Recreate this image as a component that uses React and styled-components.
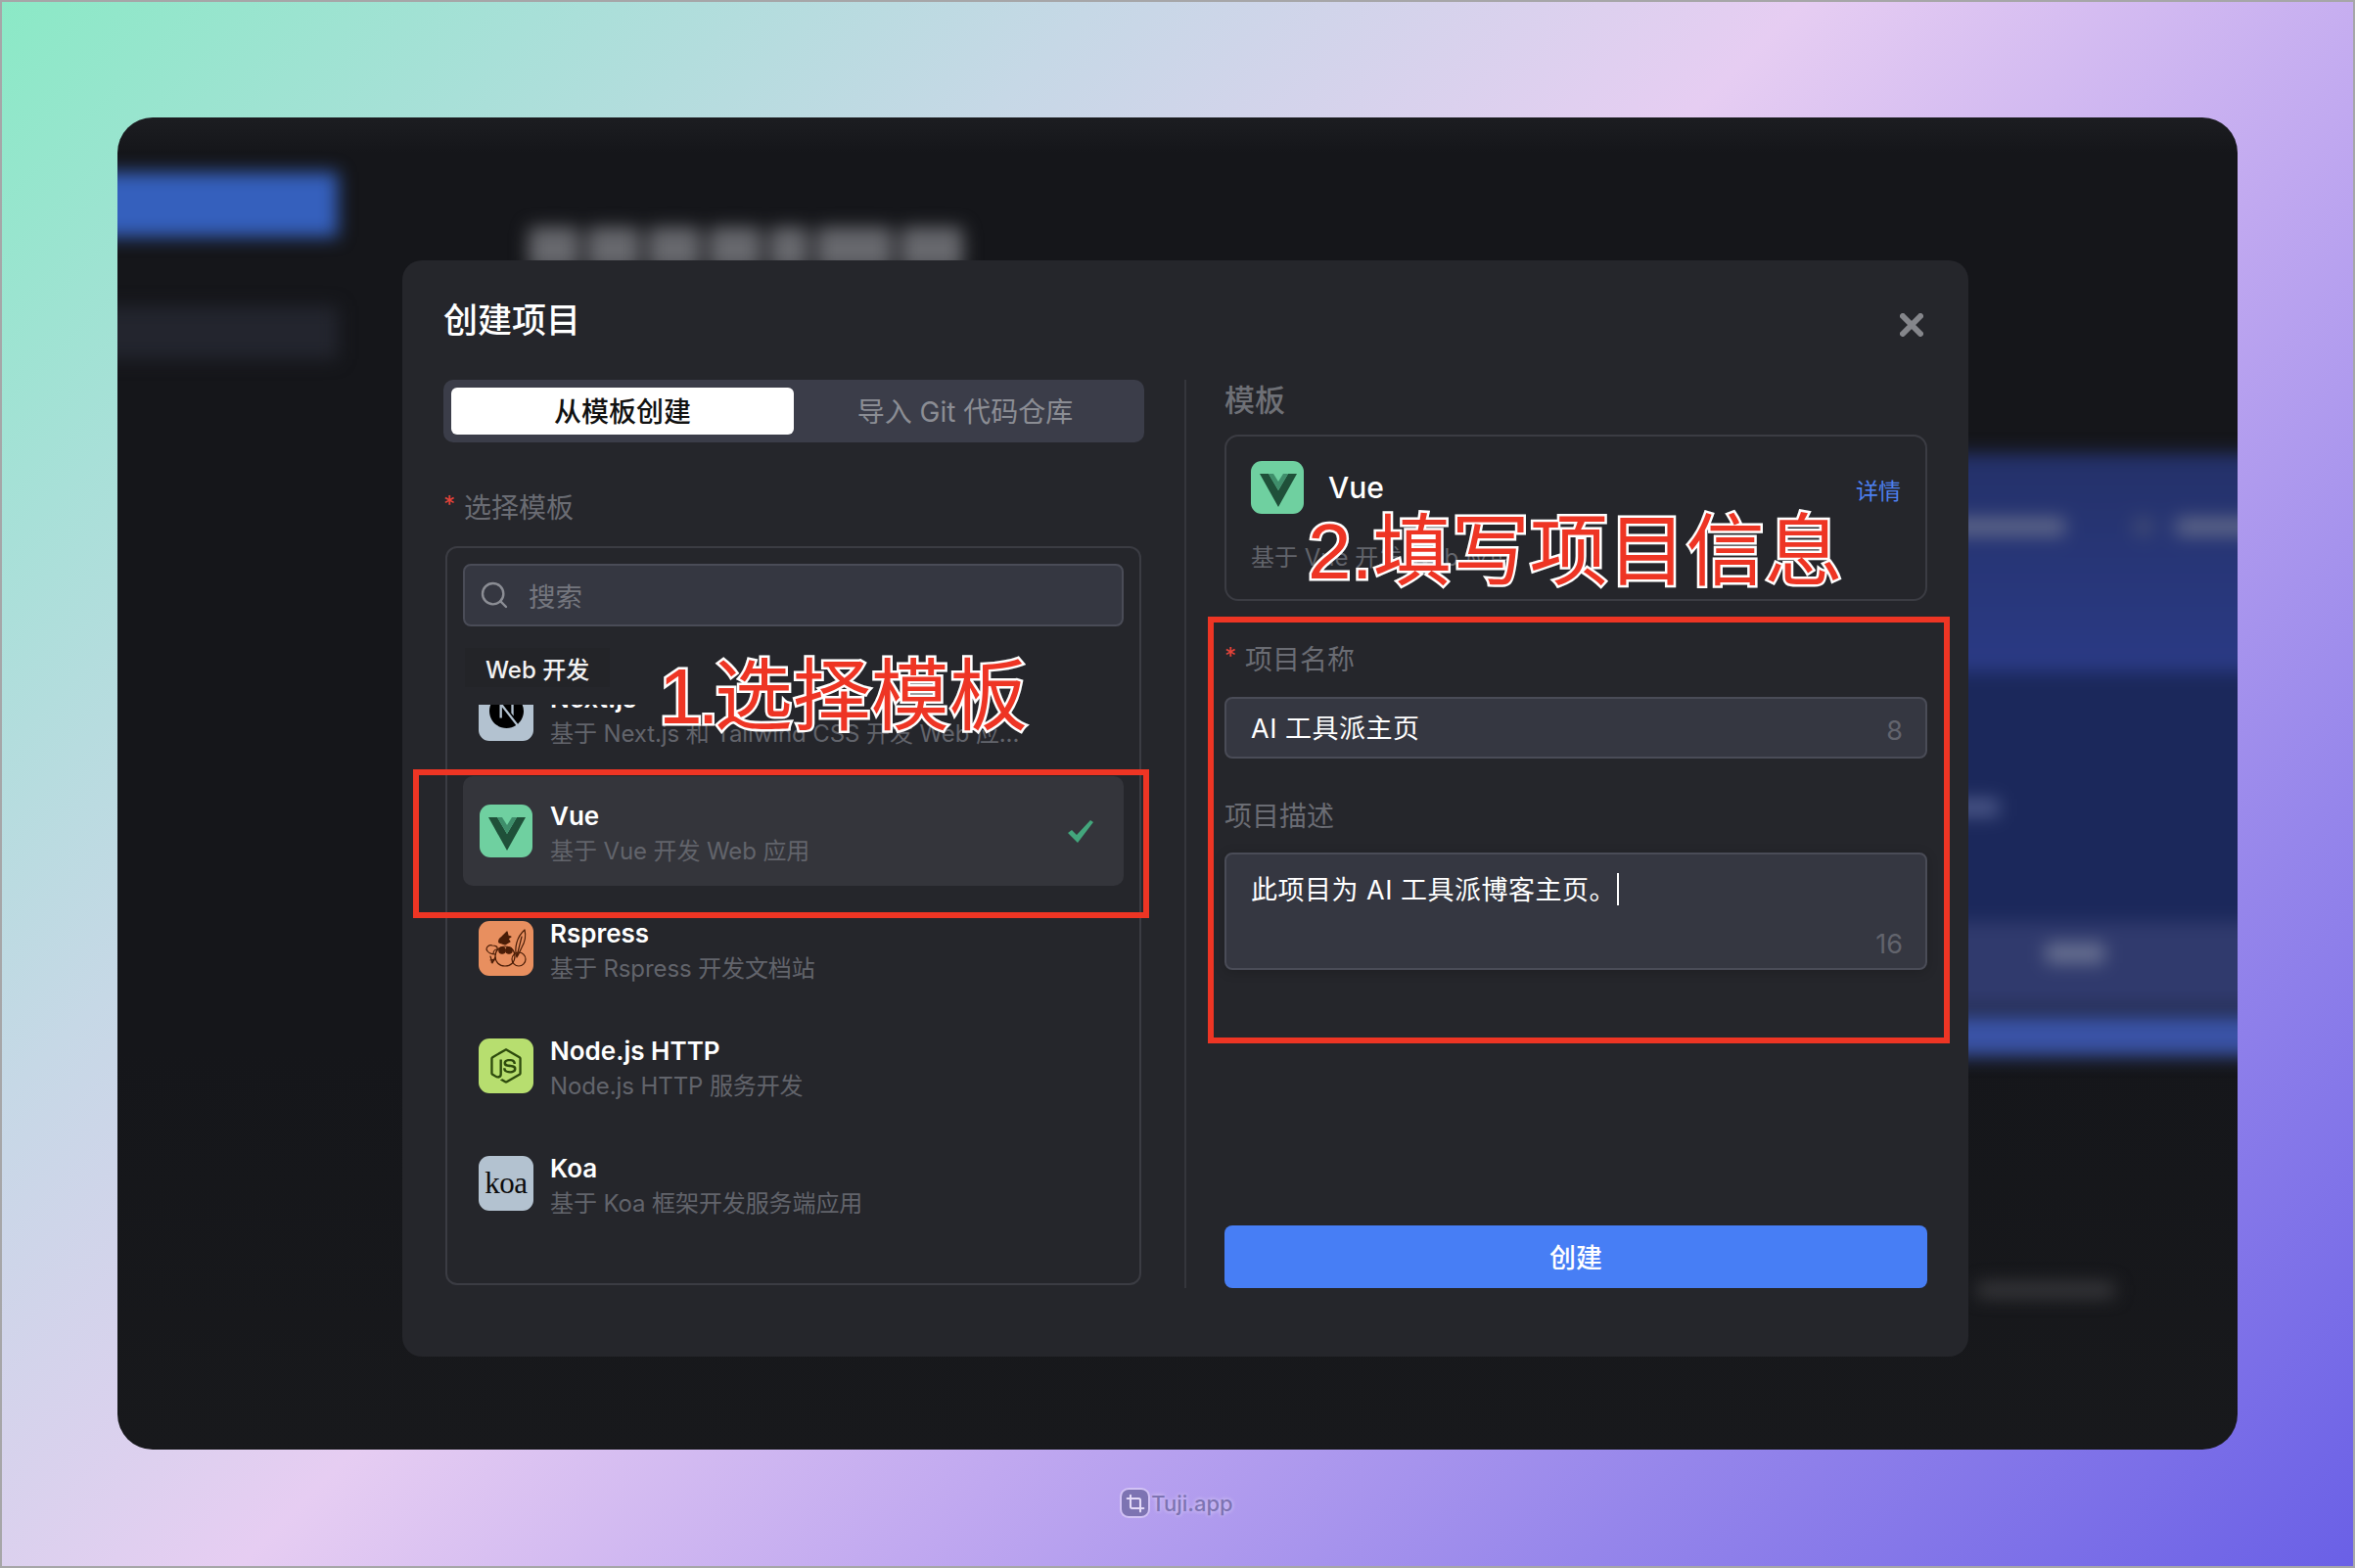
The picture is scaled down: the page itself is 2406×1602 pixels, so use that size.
import React from 'react';
import styled, { createGlobalStyle } from 'styled-components';
import { Search, Crop } from 'lucide-react';
import { FaNodeJs } from 'react-icons/fa';
import { SiNextdotjs } from 'react-icons/si';

const UI_FONT = `Inter, "Noto Sans CJK SC", "Noto Sans", sans-serif`;

const GlobalStyle = createGlobalStyle`
  html, body {
    margin: 0;
    padding: 0;
    width: 2406px;
    height: 1602px;
    overflow: hidden;
  }
  * {
    box-sizing: border-box;
  }
`;

const Page = styled.div`
  width: 2406px;
  height: 1602px;
  border: 2px solid #a6a6a8;
  padding: 118px 118px 0;
  background: linear-gradient(135deg, #8be9c6 0%, #a8e0d8 14%, #c6d8e6 28%, #e6cdf2 46%, #c0a8f0 63%, #9686eb 80%, #6a60e6 100%);
  font-family: ${UI_FONT};
  display: flex;
  flex-direction: column;
`;

const Window = styled.div`
  height: 1361px;
  border-radius: 36px;
  overflow: hidden;
  display: grid;
  background: linear-gradient(180deg, #1c1d21 0, #15161a 36px, #15161a 70%, #18191c 100%);
`;

const BlurLayer = styled.div`
  grid-area: 1 / 1;
  margin: -20px;
  padding-top: 20px;
  display: flex;
  filter: blur(9px);
`;

const Sidebar = styled.div`
  width: 245px;
  flex: none;
  padding-top: 56px;
`;

const SideBar = styled.div`
  height: ${p => p.$h}px;
  margin-bottom: 71px;
  background: ${p => p.$color};
`;

const BackMain = styled.div`
  flex: 1;
`;

const BackHeading = styled.div`
  display: flex;
  gap: 8px;
  margin: 112px 0 0 195px;
  height: 44px;
`;

const HeadingBlob = styled.div`
  width: ${p => p.$w}px;
  background: #67686d;
  border-radius: 6px;
`;

const Hero = styled.div`
  margin: 187px 0 0 655px;
  display: flex;
  flex-direction: column;
`;

const HeroBand = styled.div`
  height: ${p => p.$h}px;
  margin-top: ${p => p.$mt || 0}px;
  background: ${p => p.$bg};
  padding: ${p => p.$pt || 0}px 0 0 990px;
  display: flex;
  gap: ${p => p.$gap || 0}px;
  align-items: flex-start;
`;

const HeroBar = styled.div`
  width: ${p => p.$w}px;
  height: ${p => p.$h || 18}px;
  margin-left: ${p => p.$ml || 0}px;
  flex: none;
  background: ${p => p.$color || '#5f6789'};
`;

const BackCaption = styled.div`
  margin: 232px 0 0 1675px;
  width: 140px;
  height: 14px;
  background: #3c3c40;
`;

const Modal = styled.div`
  grid-area: 1 / 1;
  position: relative;
  align-self: start;
  justify-self: start;
  margin: 146px 0 0 291px;
  width: 1600px;
  height: 1120px;
  padding: 38px 42px 0;
  border-radius: 20px;
  background: #25262b;
`;

const ModalHeader = styled.div`
  height: 84px;
  display: flex;
  justify-content: space-between;
  align-items: flex-start;
`;

const Title = styled.div`
  font-size: 35px;
  line-height: 46px;
  font-weight: 500;
  color: #fff;
`;

const CloseIcon = styled.svg`
  width: 24px;
  height: 24px;
  margin: 16px 4px 0 0;
`;

const Columns = styled.div`
  height: 928px;
  display: flex;
`;

const LeftColumn = styled.div`
  width: 716px;
  flex: none;
`;

const Divider = styled.div`
  width: 2px;
  margin: 0 39px 0 41px;
  flex: none;
  background: #35363c;
`;

const RightColumn = styled.div`
  flex: 1;
  display: flex;
  flex-direction: column;
`;

const Tabs = styled.div`
  height: 64px;
  padding: 8px;
  display: flex;
  border-radius: 10px;
  background: #3b3d49;
`;

const Tab = styled.div`
  width: ${p => (p.$active ? '350px' : 'auto')};
  flex: ${p => (p.$active ? 'none' : 1)};
  display: flex;
  align-items: center;
  justify-content: center;
  padding-bottom: 2px;
  border-radius: 6px;
  font-size: 28px;
  font-weight: ${p => (p.$active ? 500 : 400)};
  color: ${p => (p.$active ? '#111' : '#8b8d94')};
  background: ${p => (p.$active ? '#fff' : 'transparent')};
`;

const FieldLabel = styled.div`
  font-size: 28px;
  line-height: 40px;
  margin-top: ${p => p.$mt}px;
  padding-top: 2px;
  height: 40px;
  color: #6a6c73;
  display: flex;
  align-items: center;
`;

const Star = styled.span`
  width: 21px;
  margin-top: -6px;
  font-size: 24px;
  color: #e5443a;
`;

const ListBox = styled.div`
  margin: 20px 3px 0 2px;
  height: 755px;
  padding: 16px;
  border: 2px solid #3b3c43;
  border-radius: 12px;
  overflow: hidden;
`;

const SearchBox = styled.div`
  height: 64px;
  padding: 0 14px;
  display: flex;
  align-items: center;
  gap: 19px;
  border: 2px solid #4a4c57;
  border-radius: 8px;
  background: #353741;
  color: #8b8d94;
  font-size: 27.500px;
  position: relative;
  z-index: 2;
`;

const Placeholder = styled.span`
  color: #74767e;
`;

const GroupHeader = styled.div`
  position: relative;
  z-index: 1;
  height: 80px;
  padding: 22px 0 0 2px;
  background: #25262b;
`;

const GroupPill = styled.div`
  width: 148px;
  height: 40px;
  padding-left: 21px;
  display: flex;
  align-items: center;
  background: #232428;
  color: #f2f2f3;
  font-size: 24px;
  font-weight: 500;
`;

const Rows = styled.div`
  margin-top: -47px;
  display: flex;
  flex-direction: column;
  gap: 8px;
`;

const Row = styled.div`
  height: 112px;
  padding: 0 31px 0 16px;
  flex: none;
  display: flex;
  align-items: center;
  gap: 17px;
  border-radius: 10px;
  background: ${p => (p.$selected ? '#34353b' : 'transparent')};
`;

const LogoTile = styled.div`
  width: ${p => p.$size || 56}px;
  height: ${p => p.$size || 56}px;
  margin: 0 ${p => p.$inset || 0}px;
  flex: none;
  display: flex;
  align-items: center;
  justify-content: center;
  border-radius: 11px;
  background: ${p => p.$bg};
  color: ${p => p.$fg || '#000'};
`;

const NextMark = styled(SiNextdotjs)`
  margin-bottom: 6px;
`;

const KoaMark = styled.span`
  font-family: "Liberation Serif", serif;
  font-size: 31px;
  color: #0d0d0d;
  letter-spacing: -0.5px;
`;

const RowText = styled.div`
  flex: 1;
  min-width: 0;
  padding-top: 5px;
`;

const RowTitle = styled.div`
  font-size: 26px;
  line-height: 34px;
  font-weight: 600;
  color: #fff;
`;

const RowSub = styled.div`
  margin-top: 2px;
  font-size: 24px;
  line-height: 34px;
  letter-spacing: -0.1px;
  color: #62646b;
  white-space: nowrap;
`;

const SectionTitle = styled.div`
  font-size: 31px;
  line-height: 42px;
  height: 40px;
  font-weight: 500;
  color: #6e7076;
`;

const TemplateCard = styled.div`
  margin-top: 16px;
  height: 170px;
  padding: 25px 25px 0;
  border: 2px solid #3b3c43;
  border-radius: 14px;
`;

const CardHead = styled.div`
  display: flex;
  align-items: center;
  gap: 25px;
`;

const CardTitle = styled.div`
  flex: 1;
  font-size: 30px;
  font-weight: 500;
  color: #fff;
`;

const DetailLink = styled.div`
  margin-top: 4px;
  font-size: 23px;
  color: #4d80ef;
`;

const CardSub = styled.div`
  margin-top: 28px;
  font-size: 24px;
  line-height: 34px;
  color: #62646b;
`;

const TextInput = styled.div`
  margin-top: ${p => p.$mt}px;
  height: 63px;
  padding: 0 25px;
  display: flex;
  align-items: center;
  justify-content: space-between;
  border: 2px solid #4a4c57;
  border-radius: 8px;
  background: #353741;
  color: #fff;
  font-size: 27px;
  letter-spacing: 0.5px;
`;

const InputValue = styled.span`
  margin-top: -3px;
`;

const Counter = styled.span`
  margin-top: ${p => p.$mt || 0}px;
  margin-right: -2px;
  align-self: ${p => (p.$end ? 'flex-end' : 'auto')};
  font-size: 27px;
  line-height: 32px;
  letter-spacing: 0;
  color: #62646d;
`;

const TextArea = styled.div`
  margin-top: 18px;
  height: 120px;
  padding: 19px 25px 8px;
  display: flex;
  flex-direction: column;
  border: 2px solid #4a4c57;
  border-radius: 8px;
  background: #353741;
  box-shadow: 0 2px 12px rgba(0, 0, 0, 0.18);
  color: #fff;
  font-size: 27px;
  line-height: 36px;
  letter-spacing: 0.5px;
`;

const DescLine = styled.div`
  flex: 1;
  display: flex;
  align-items: flex-start;
`;

const Caret = styled.span`
  display: inline-block;
  width: 2px;
  height: 33px;
  margin-left: 1px;
  background: #fff;
`;

const CreateButton = styled.div`
  margin-top: auto;
  height: 64px;
  padding-bottom: 2px;
  display: flex;
  align-items: center;
  justify-content: center;
  border-radius: 8px;
  background: #477ef5;
  color: #fff;
  font-size: 27px;
  font-weight: 500;
`;

const RedFrame = styled.div`
  position: absolute;
  left: ${p => p.$x}px;
  top: ${p => p.$y}px;
  width: ${p => p.$w}px;
  height: ${p => p.$h}px;
  border: 6px solid #ee3524;
  z-index: 5;
`;

const Annotation = styled.div`
  position: absolute;
  left: ${p => p.$x}px;
  top: ${p => p.$y}px;
  z-index: 6;
  font-family: "Liberation Sans", "Noto Sans CJK SC", sans-serif;
  font-size: 80px;
  font-weight: 400;
  line-height: 80px;
  white-space: nowrap;
  color: #ee3524;
  -webkit-text-stroke: 5px #fff;
  paint-order: stroke fill;
`;

const AnnotationNumber = styled.span`
  letter-spacing: -5px;
`;

const Watermark = styled.div`
  margin-top: 41px;
  align-self: center;
  display: flex;
  align-items: center;
  gap: 3px;
  color: #7d73b2;
  font-size: 22px;
  font-weight: 500;
  text-shadow: 0 0 4px rgba(233, 222, 250, 0.9);
`;

const WatermarkIcon = styled.div`
  width: 27px;
  height: 27px;
  display: flex;
  align-items: center;
  justify-content: center;
  border-radius: 7px;
  background: #7d73b2;
  color: #e4daf8;
  box-shadow: 0 0 0 2px rgba(233, 222, 250, 0.55);
`;

const CheckMark = styled.svg`
  width: 26px;
  height: 23px;
  flex: none;
`;

const VueLogo = () => (
  <svg width="54" height="54" viewBox="0 0 54 54">
    <polygon points="9,13 18,13 28,30 38,13 47,13 28,47" fill="#1f5039" />
    <polygon points="18,13 23,13 28,21 33,13 38,13 28,30" fill="#3f8e6b" />
  </svg>
);

const RspressLogo = () => (
  <svg width="56" height="56" viewBox="0 0 56 56" fill="none" stroke="#4a1d07" strokeWidth="1.2" strokeLinejoin="round" strokeLinecap="round">
    <path d="M21 22c-1-2 0-4 3-6l5-5 1 4 3 1-3 2 2 3-5 3-6-2z" fill="#4a1d07" />
    <path d="M47 9c1.500 6 0 13-3 18-2 4-3 7-5 10-3-9 0-21 8-28zM44 16l-5 20" />
    <path d="M17 36c0-6 4-10 10-10s10 4 10 10-4 10-10 10-10-4-10-10z" />
    <circle cx="24" cy="30" r="3.200" fill="#4a1d07" />
    <circle cx="31" cy="30" r="3.200" fill="#4a1d07" />
    <path d="M17 34c-4 0-8-2-9-5 0-3 3-5 6-4 3 0 6 1 5 4-3 0-4 1-4 5z" />
    <path d="M12 36l2 7 3-6" />
    <path d="M12 40l5-1M13 42l3-2" />
    <circle cx="41" cy="39" r="7" />
  </svg>
);

const App = () => (
  <>
    <GlobalStyle />
    <Page>
      <Window>
        <BlurLayer>
          <Sidebar>
            <SideBar $h={66} $color="#3560bd" />
            <SideBar $h={54} $color="#23252e" />
          </Sidebar>
          <BackMain>
            <BackHeading>
              <HeadingBlob $w={52} />
              <HeadingBlob $w={54} />
              <HeadingBlob $w={54} />
              <HeadingBlob $w={54} />
              <HeadingBlob $w={40} />
              <HeadingBlob $w={78} />
              <HeadingBlob $w={64} />
            </BackHeading>
            <Hero>
              <HeroBand $h={223} $pt={66} $bg="linear-gradient(180deg, #243169, #2a3a85)">
                <HeroBar $w={120} />
                <HeroBar $w={20} $ml={70} $color="#3f4a75" />
                <HeroBar $w={90} $ml={23} />
              </HeroBand>
              <HeroBand $h={256} $pt={130} $bg="#1b285b">
                <HeroBar $w={52} $color="#4c5889" />
              </HeroBand>
              <HeroBand $h={89} $pt={22} $bg="#303a6d">
                <HeroBar $w={60} $ml={100} $h={20} $color="#6a7292" />
              </HeroBand>
              <HeroBand $h={42} $mt={6} $bg="#3a53a6" />
            </Hero>
            <BackCaption />
          </BackMain>
        </BlurLayer>

        <Modal>
          <ModalHeader>
            <Title>创建项目</Title>
            <CloseIcon viewBox="0 0 24 24">
              <path d="M3 3L21 21M21 3L3 21" stroke="#85868b" strokeWidth="6" strokeLinecap="round" />
            </CloseIcon>
          </ModalHeader>
          <Columns>
            <LeftColumn>
              <Tabs>
                <Tab $active>从模板创建</Tab>
                <Tab>导入 Git 代码仓库</Tab>
              </Tabs>
              <FieldLabel $mt={46}><Star>*</Star>选择模板</FieldLabel>
              <ListBox>
                <SearchBox>
                  <Search size={32} strokeWidth={1.8} />
                  <Placeholder>搜索</Placeholder>
                </SearchBox>
                <GroupHeader>
                  <GroupPill>Web 开发</GroupPill>
                </GroupHeader>
                <Rows>
                  <Row>
                    <LogoTile $bg="#b3c2d0"><NextMark size={35} /></LogoTile>
                    <RowText>
                      <RowTitle>Next.js</RowTitle>
                      <RowSub>基于 Next.js 和 Tailwind CSS 开发 Web 应...</RowSub>
                    </RowText>
                  </Row>
                  <Row $selected>
                    <LogoTile $size={54} $inset={1} $bg="#6fd0a0"><VueLogo /></LogoTile>
                    <RowText>
                      <RowTitle>Vue</RowTitle>
                      <RowSub>基于 Vue 开发 Web 应用</RowSub>
                    </RowText>
                    <CheckMark viewBox="0 0 26 23">
                      <path d="M0 13L4 10L9 15L23 0L26 2L10 23Z" fill="#43a67c" />
                    </CheckMark>
                  </Row>
                  <Row>
                    <LogoTile $bg="#e88f5f"><RspressLogo /></LogoTile>
                    <RowText>
                      <RowTitle>Rspress</RowTitle>
                      <RowSub>基于 Rspress 开发文档站</RowSub>
                    </RowText>
                  </Row>
                  <Row>
                    <LogoTile $bg="#b7de6f" $fg="#2d4a0d"><FaNodeJs size={36} /></LogoTile>
                    <RowText>
                      <RowTitle>Node.js HTTP</RowTitle>
                      <RowSub>Node.js HTTP 服务开发</RowSub>
                    </RowText>
                  </Row>
                  <Row>
                    <LogoTile $bg="#b3c2d0"><KoaMark>koa</KoaMark></LogoTile>
                    <RowText>
                      <RowTitle>Koa</RowTitle>
                      <RowSub>基于 Koa 框架开发服务端应用</RowSub>
                    </RowText>
                  </Row>
                </Rows>
              </ListBox>
            </LeftColumn>
            <Divider />
            <RightColumn>
              <SectionTitle>模板</SectionTitle>
              <TemplateCard>
                <CardHead>
                  <LogoTile $size={54} $bg="#6fd0a0"><VueLogo /></LogoTile>
                  <CardTitle>Vue</CardTitle>
                  <DetailLink>详情</DetailLink>
                </CardHead>
                <CardSub>基于 Vue 开发 Web 应用</CardSub>
              </TemplateCard>
              <FieldLabel $mt={39}><Star>*</Star>项目名称</FieldLabel>
              <TextInput $mt={19}>
                <InputValue>AI 工具派主页</InputValue>
                <Counter $mt={6}>8</Counter>
              </TextInput>
              <FieldLabel $mt={38}>项目描述</FieldLabel>
              <TextArea>
                <DescLine>此项目为 AI 工具派博客主页。<Caret /></DescLine>
                <Counter $end>16</Counter>
              </TextArea>
              <CreateButton>创建</CreateButton>
            </RightColumn>
          </Columns>

          <RedFrame $x={11} $y={520} $w={752} $h={152} />
          <RedFrame $x={823} $y={364} $w={758} $h={436} />
          <Annotation $x={262} $y={406}><AnnotationNumber>1.</AnnotationNumber>选择模板</Annotation>
          <Annotation $x={925} $y={258}>2.填写项目信息</Annotation>
        </Modal>
      </Window>
      <Watermark>
        <WatermarkIcon><Crop size={20} strokeWidth={2.5} /></WatermarkIcon>
        Tuji.app
      </Watermark>
    </Page>
  </>
);

export default App;
